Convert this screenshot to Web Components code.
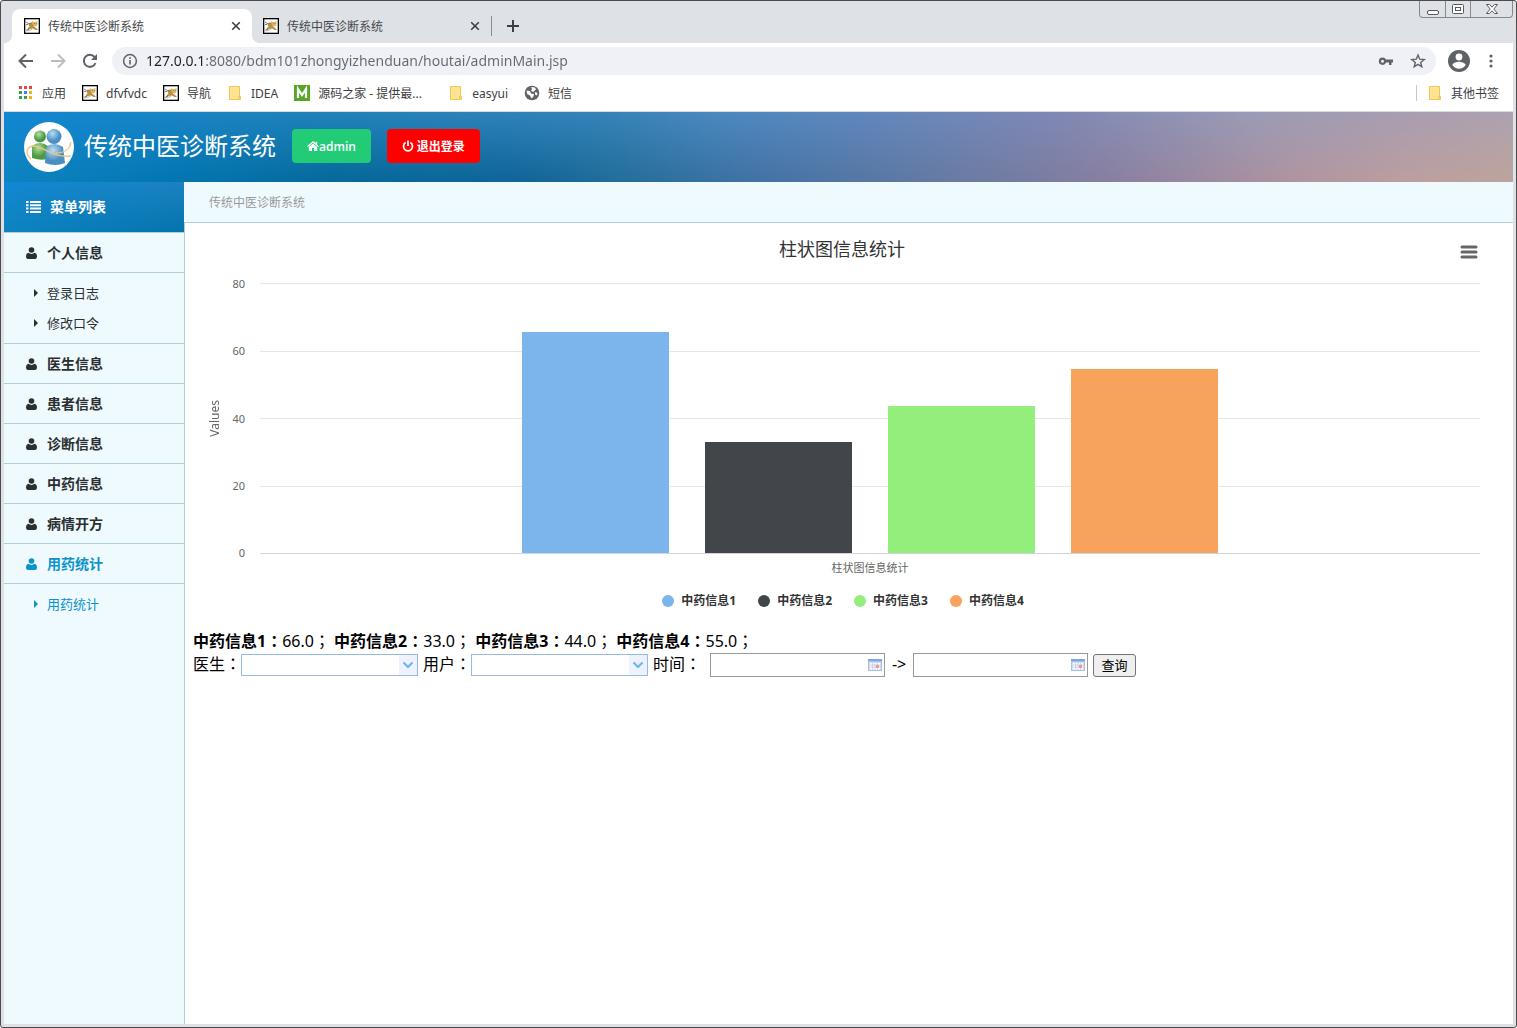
<!DOCTYPE html>
<html lang="zh-CN">
<head>
<meta charset="utf-8">
<title>传统中医诊断系统</title>
<style>
  body { margin: 0; font-family: "Noto Sans", "Noto Sans CJK SC", sans-serif; font-size: 12px; color: #333; }
</style>
</head>
<body>
<window-frame>
  <tab-strip slot="chrome">
    <browser-tab active>传统中医诊断系统</browser-tab>
    <browser-tab>传统中医诊断系统</browser-tab>
  </tab-strip>
  <address-bar slot="chrome" url="127.0.0.1:8080/bdm101zhongyizhenduan/houtai/adminMain.jsp"></address-bar>
  <bookmark-bar slot="chrome">
    <bookmark-link icon="apps">应用</bookmark-link>
    <bookmark-link icon="cat">dfvfvdc</bookmark-link>
    <bookmark-link icon="cat">导航</bookmark-link>
    <bookmark-link icon="folder">IDEA</bookmark-link>
    <bookmark-link icon="mark" wide>源码之家 - 提供最...</bookmark-link>
    <bookmark-link icon="folder">easyui</bookmark-link>
    <bookmark-link icon="globe">短信</bookmark-link>
    <bookmark-link slot="end" icon="folder">其他书签</bookmark-link>
  </bookmark-bar>
  <site-header heading="传统中医诊断系统">
    <header-button icon="home" tone="green">admin</header-button>
    <header-button icon="power" tone="red">退出登录</header-button>
  </site-header>
  <app-layout>
    <side-menu slot="menu" heading="菜单列表">
      <menu-group heading="个人信息">
        <menu-link>登录日志</menu-link>
        <menu-link>修改口令</menu-link>
      </menu-group>
      <menu-group heading="医生信息"></menu-group>
      <menu-group heading="患者信息"></menu-group>
      <menu-group heading="诊断信息"></menu-group>
      <menu-group heading="中药信息"></menu-group>
      <menu-group heading="病情开方"></menu-group>
      <menu-group heading="用药统计" active>
        <menu-link>用药统计</menu-link>
      </menu-group>
    </side-menu>
    <crumb-bar slot="crumb">传统中医诊断系统</crumb-bar>
    <bar-chart heading="柱状图信息统计" max="80" step="20" axis="Values"
      series='[["中药信息1",66,"#7cb5ec"],["中药信息2",33,"#424549"],["中药信息3",44,"#94ee7c"],["中药信息4",55,"#f7a35c"]]'></bar-chart>
    <stat-line series='[["中药信息1","66.0"],["中药信息2","33.0"],["中药信息3","44.0"],["中药信息4","55.0"]]'></stat-line>
    <filter-form></filter-form>
  </app-layout>
</window-frame>

<script>
const base = `<style>
  :host { display: block; box-sizing: border-box; }
  *, ::before, ::after { box-sizing: border-box; }
  button, input, select { font: inherit; color: inherit; margin: 0; }
  button { background: none; border: 0; padding: 0; }
  a { color: inherit; text-decoration: none; }
  svg { display: block; flex: none; }
</style>`;

function element(name, view) {
  customElements.define(name, class extends HTMLElement {
    connectedCallback() {
      if (this.shadowRoot) return;
      this.attachShadow({ mode: 'open' }).innerHTML = base + view(this);
    }
  });
}

const icons = {
  cat: [16, `<rect x=".5" y=".5" width="15" height="15" fill="#fff" stroke="#000"/><rect x="1" y="1" width="14" height="14" fill="none" stroke="#000" stroke-width=".6"/>
    <path d="M8 3l1.500 1h2L13.500 3v3.500L12 8.500 9.500 8 8 6.500z" fill="#e0b562"/>
    <path d="M4 5.500l4-.5 2 3.500 2 1.500 2 2h-2.500L9 10.500 6 11l-2.500 2 .5-3 1.500-1.500z" fill="#b98e45"/>
    <path d="M2 4l2.500 1.500L8 5M2 6.500h2M2 12.500l3-2M10 5.500h.8M12 5.500h.6" stroke="#6f6657" stroke-width=".8" fill="none"/>
    <path d="M2.500 13l3-.5 3-1.500" stroke="#aaa" stroke-width=".8" fill="none"/>`],
  apps: [16, `<g><path fill="#e9443a" d="M1 1h3v3H1zM6 1h3v3H6zM11 1h3v3h-3z"/><path fill="#34a050" d="M1 6h3v3H1zM1 11h3v3H1zM6 11h3v3H6z"/><path fill="#3a82f7" d="M6 6h3v3H6z"/><path fill="#f8b013" d="M11 6h3v3h-3zM11 11h3v3h-3z"/></g>`],
  folder: [16, `<path d="M2.500 1.500h10v9.500a1.500 1.500 0 0 1 1 1.500v2h-11z" fill="#ffe494" stroke="#efc653"/><path d="M11.500 14.500v-3h1.500v3" fill="#ffe494" stroke="#efc653"/>`],
  mark: [16, `<path fill="#56a726" d="M0 0h16v16H0z"/><path d="M4 13V4l4 6 4-6v9" fill="none" stroke="#fff" stroke-width="2.200"/>`],
  globe: [16, `<circle cx="8" cy="8" r="7.300" fill="#5f6368"/><path d="M2.500 5.500l3.500.5 1 2.500 3 .5-.5 2.500-2 2-1.500-3L3 9zM7 2l4 .5 1 2-3 2.500-2-1.500 1-1.500zM11 7l2.500 1-.5 2.500-2-1z" fill="#fff"/>`],
  back: [16, `<path d="M15 8H2M8 1.500L1.500 8 8 14.500" fill="none" stroke="#5f6368" stroke-width="2"/>`],
  forward: [16, `<path d="M1 8h13M8 1.500L14.500 8 8 14.500" fill="none" stroke="#bcbec1" stroke-width="2"/>`],
  reload: [16, `<path d="M13.500 10A6 6 0 1 1 12.500 4" fill="none" stroke="#5f6368" stroke-width="2"/><path d="M15 1v6H9z" fill="#5f6368"/>`],
  info: [16, `<circle cx="8" cy="8" r="6.400" fill="none" stroke="#5f6368" stroke-width="1.500"/><path d="M8 7v4.500M8 4.300v1.600" stroke="#5f6368" stroke-width="1.600"/>`],
  key: [16, `<path d="M4.500 4.500a3.700 3.700 0 1 0 3.500 5h3V12h2.500V9.500H15v-3H8a3.700 3.700 0 0 0-3.500-2zm0 2.200a1.500 1.500 0 1 1 0 3 1.500 1.500 0 0 1 0-3z" fill="#5f6368" fill-rule="evenodd"/>`],
  star: [16, `<path d="M8 2l1.700 4.200 4.500.3-3.500 2.900 1.100 4.400L8 11.400l-3.800 2.400 1.100-4.400L1.800 6.500l4.500-.3z" fill="none" stroke="#5f6368" stroke-width="1.400"/>`],
  person: [22, `<circle cx="11" cy="11" r="11" fill="#5f6368"/><circle cx="11" cy="7" r="3.400" fill="#fff"/><path d="M4.300 15C5 12.600 9 11.800 11 11.800s6 .8 6.700 3.200a8 8 0 0 1-13.400 0z" fill="#fff"/>`],
  dots: [16, `<g fill="#5f6368"><circle cx="8" cy="3" r="1.600"/><circle cx="8" cy="8" r="1.600"/><circle cx="8" cy="13" r="1.600"/></g>`],
  close: [10, `<path d="M1.200 1.200l7.600 7.600M8.800 1.200L1.200 8.800" stroke="#3c4043" stroke-width="1.600"/>`],
  plus: [12, `<path d="M6 0v12M0 6h12" stroke="#3c4043" stroke-width="2"/>`],
  home: [12, `<path d="M6 1L0 6.200l.8.900L6 2.800l5.200 4.300.8-.9-1.800-1.500V1.700H8.600v1.500z" fill="currentColor"/><path d="M6 3.400L1.800 7V11H5V8h2v3h3.200V7z" fill="currentColor"/>`],
  power: [12, `<path d="M3.600 2.500a4.500 4.500 0 1 0 4.800 0M6 .5v5.500" fill="none" stroke="currentColor" stroke-width="1.700"/>`],
  user: [12, `<circle cx="5.500" cy="3" r="2.800" fill="currentColor"/><path d="M2.500 5.800C.8 6.200 0 7.500 0 9.600 0 11.100.8 12 2 12h7c1.200 0 2-.9 2-2.400 0-2.100-.7-3.400-2.500-3.800-1.500 1.500-4.500 1.500-6 0z" fill="currentColor"/>`],
  list: [16, `<path d="M0 2h2.500v2H0zM4 2h11v2H4zM0 5.300h2.500v2H0zM4 5.300h11v2H4zM0 8.600h2.500v2H0zM4 8.600h11v2H4zM0 11.900h2.500v2H0zM4 11.900h11v2H4z" fill="currentColor"/>`],
  caret: [8, `<path d="M2 0v8l4-4z" fill="currentColor"/>`],
  menu: [18, `<path d="M2 4h14M2 9h14M2 14h14" stroke="#666" stroke-width="3" stroke-linecap="round"/>`],
  chevron: [12, `<path d="M1.500 3.500L6 8l4.500-4.500" fill="none" stroke="#6fb5ea" stroke-width="2.200"/>`],
  calendar: [14, `<path d="M0 1h14v12H0z" fill="#cfdcf1"/><path d="M0 1h14v2.500H0z" fill="#7fa5e3"/><path d="M2 5h10v6.500H2z" fill="#fff"/><path d="M2 7h10M2 9h10M4.500 5v6.500M7 5v6.500M9.500 5v6.500" stroke="#bccbe8" stroke-width=".8"/><path d="M8 7h3v3H8z" fill="#ee9a86"/><path d="M0 12.500h14M.5 4v9M13.500 4v9" stroke="#b0bfdb"/>`],
};
const icon = name => `<svg width="${icons[name][0]}" height="${icons[name][0]}" viewBox="0 0 ${icons[name][0]} ${icons[name][0]}" aria-hidden="true">${icons[name][1]}</svg>`;

/* Fullwidth marks are centred in their cell in the Traditional Chinese forms */
const mark = ch => `<span class="mid" lang="zh-TW">${ch}</span>`;
const midStyle = `.mid { font-family: "Noto Sans CJK TC", sans-serif; line-height: 1; }`;

/* Sky-to-sunset artwork shared by the header and the menu heading */
const artwork = sel => `
  ${sel} { position: relative; z-index: 0; background: var(--low); }
  ${sel}::before { content: ""; position: absolute; inset: 0; z-index: -1; background: var(--high);
    -webkit-mask-image: linear-gradient(#000, transparent); mask-image: linear-gradient(#000, transparent); }`;

element('window-frame', () => `<style>
  :host { display: flex; flex-direction: column; min-height: 100vh; background: #dee1e6;
    border: 1px solid #4b4b4d; border-radius: 3px; padding: 0 3px 3px; }
  .page { flex: 1; display: flex; flex-direction: column; background: #fff; }
</style><slot name="chrome"></slot><div class="page"><slot></slot></div>`);

element('tab-strip', () => `<style>
  :host { display: flex; height: 42px; padding-left: 8px; align-items: flex-end; }
  .new { display: flex; align-items: center; height: 20px; margin-bottom: 7px; border-left: 1px solid #888c90; padding-left: 15px; }
  .controls { margin-left: auto; align-self: flex-start; display: flex; border: 1px solid #85898f; border-top: 0; border-radius: 0 0 4px 4px; }
  .controls button { height: 16px; width: 25px; display: grid; place-items: center; border-left: 1px solid #85898f; }
  .controls button:first-child { border-left: 0; }
  .controls button:last-child { width: 42px; }
</style><slot></slot>
<button class="new" aria-label="+">${icon('plus')}</button>
<div class="controls">
  <button aria-label="_"><svg width="12" height="12"><rect x=".5" y="7.500" width="11" height="4" rx="1.500" fill="#fff" stroke="#55585d"/></svg></button>
  <button aria-label="□"><svg width="12" height="12"><rect x=".5" y="1.500" width="11" height="9" rx="1" fill="#fff" stroke="#55585d"/><rect x="3.500" y="4.500" width="5" height="3" fill="#fff" stroke="#55585d"/></svg></button>
  <button aria-label="×"><svg width="12" height="12"><path d="M.5 1.500h3L6 4.200l2.500-2.700h3L7.800 6l3.700 4.500h-3L6 7.800l-2.500 2.700h-3L4.200 6z" fill="#fff" stroke="#55585d"/></svg></button>
</div>`);

element('browser-tab', () => `<style>
  :host { display: flex; width: 239px; height: 34px; padding: 0 11px; align-items: center; gap: 8px; position: relative; color: #45494d; }
  :host([active]) { width: 240px; padding: 0 11px 0 12px; background: #fff; border-radius: 8px 8px 0 0; }
  :host([active])::before, :host([active])::after { content: ""; position: absolute; bottom: 0; width: 8px; height: 8px; }
  :host([active])::before { left: -8px; background: radial-gradient(circle at 0 0, transparent 8px, #fff 8px); }
  :host([active])::after { right: -8px; background: radial-gradient(circle at 100% 0, transparent 8px, #fff 8px); }
  .name { flex: 1; text-align: left; line-height: 18px; padding-top: 2px; }
</style>${icon('cat')}<button class="name"><slot></slot></button><button aria-label="×">${icon('close')}</button>`);

element('address-bar', host => `<style>
  :host { display: flex; align-items: center; gap: 16px; height: 36px; padding: 0 14px; background: #fff; }
  .box { flex: 1; display: flex; align-items: center; gap: 16px; height: 28px; border-radius: 14px; background: #eff1f7; padding: 0 10px; margin: 0 -4px 0 -2px; }
  input { flex: 1; min-width: 0; margin-left: -8px; border: 0; padding: 0; outline: 0; font-size: 14px; line-height: 20px;
    color: transparent; background: linear-gradient(to right, #202124 60px, #65696e 60px); -webkit-background-clip: text; background-clip: text; }
  .user { margin-right: -3px; }
</style>
<button aria-label="←">${icon('back')}</button><button aria-label="→">${icon('forward')}</button><button aria-label="↻">${icon('reload')}</button>
<div class="box">${icon('info')}<input type="text" aria-label="URL" value="${host.getAttribute('url')}"><button aria-label="key">${icon('key')}</button><button aria-label="☆">${icon('star')}</button></div>
<button class="user" aria-label="user">${icon('person')}</button><button aria-label="⋮">${icon('dots')}</button>`);

element('bookmark-bar', () => `<style>
  :host { display: flex; align-items: center; gap: 16px; height: 33px; padding: 0 14px 4px; background: #fff; border-bottom: 1px solid #d9dade; }
  .end { margin-left: auto; border-left: 1px solid #c6c8cb; padding-left: 10px; height: 16px; display: flex; align-items: center; }
</style><slot></slot><div class="end"><slot name="end"></slot></div>`);

element('bookmark-link', host => `<style>
  :host([wide]) { width: 138px; }
  a { display: flex; align-items: center; gap: 8px; line-height: 18px; color: #3c4043; white-space: nowrap; }
  span { padding-top: 2px; }
</style><a href="#">${icon(host.getAttribute('icon'))}<span><slot></slot></span></a>`);

element('site-header', host => `<style>
  :host { --low: linear-gradient(to right, #0d84c0, #0275b0 12%, #06699b 22%, #0f6498 34%, #276f9b 42%, #4372a5 50%, #5f79a3 60%, #887fa0 73%, #b295a0 86%, #bd9f9f 93%, #bea49c);
    --high: linear-gradient(to right, #1287d2, #1f82ba 20%, #3683b8 40%, #4a88bf 47%, #6187bd 57%, #8088b4 70%, #9b9bb5 83%, #a89db0 93%, #aca2b0); }
  header { display: flex; align-items: center; height: 70px; padding-left: 20px; gap: 16px; }
  ${artwork('header')}
  .brand { display: flex; align-items: center; gap: 10px; }
  h1 { margin: 0; padding-bottom: 2px; font-size: 24px; line-height: 32px; font-weight: 400; color: #fff; }
</style><header><div class="brand">
<svg width="50" height="50" viewBox="0 0 50 50" aria-hidden="true">
  <defs>
    <radialGradient id="g" cx=".4" cy=".3"><stop offset="0" stop-color="#b5dd9e"/><stop offset="1" stop-color="#4c9a45"/></radialGradient>
    <radialGradient id="b" cx=".4" cy=".3"><stop offset="0" stop-color="#b9def5"/><stop offset="1" stop-color="#4a8ec2"/></radialGradient>
  </defs>
  <circle cx="25" cy="25" r="25" fill="#fff"/>
  <path d="M8 24q8-6 16 0v13q-8 2-16-1z" fill="url(#g)"/><circle cx="16" cy="14.500" r="6" fill="url(#g)"/>
  <path d="M22 25q8-6 17 0l2 16q-10 4-20 0z" fill="url(#b)"/><circle cx="30" cy="14.500" r="7.500" fill="url(#b)"/>
  <path d="M7 37C0 31 3 24 10 24c9 0 18 12 37 10M32 31c7 0 14-3 15-11" fill="none" stroke="#efc67b" stroke-width="1.400"/>
</svg><h1>${host.getAttribute('heading')}</h1></div><slot></slot></header>`);

element('header-button', host => `<style>
  :host { margin-bottom: 2px; font-family: "Open Sans", "Noto Sans CJK SC", sans-serif; }
  button { display: flex; align-items: center; height: 34px; padding: 0 15px; border-radius: 4px; color: #fff; font-weight: 600; background: #22cc77; }
  :host([tone=red]) button { background: #fe0000; gap: 3px; }
</style><button>${icon(host.getAttribute('icon'))}<span><slot></slot></span></button>`);

element('app-layout', () => `<style>
  :host { flex: 1; display: flex; }
  main { flex: 1; min-width: 0; display: flex; flex-direction: column; }
  .work { flex: 1; border-left: 1px solid #b3cfd6; padding: 0 8px; }
</style><slot name="menu"></slot><main><slot name="crumb"></slot><div class="work"><slot></slot></div></main>`);

element('side-menu', host => `<style>
  :host { width: 180px; flex: none; background: #effaff;
    --low: linear-gradient(to right, #0d84c0, #0474ad); --high: linear-gradient(to right, #1287d2, #1c82c0); }
  h2 { display: flex; align-items: center; gap: 8px; margin: 0; height: 51px; padding-left: 22px; border-bottom: 1px solid #b3cfd6; font-size: 14px; color: #fff; }
  h2 span { padding-bottom: 2px; }
  ${artwork('h2')}
</style><nav><h2>${icon('list')}<span>${host.getAttribute('heading')}</span></h2><slot></slot></nav>`);

element('menu-group', host => `<style>
  :host { color: #2b2f2f; }
  :host([active]) { color: #0c93c9; }
  button { display: flex; align-items: center; gap: 9px; width: 100%; height: 40px; padding-left: 22px; border-bottom: 1px solid #b3cfd6; font-size: 14px; font-weight: 700; }
  button span { padding-bottom: 2px; }
  .sub { padding: 5px 0; border-bottom: 1px solid #b3cfd6; }
  :host([active]) .sub { border-bottom: 0; }
</style><button>${icon('user')}<span>${host.getAttribute('heading')}</span></button>${host.children.length ? '<div class="sub"><slot></slot></div>' : ''}`);

element('menu-link', () => `<style>
  a { display: flex; align-items: center; gap: 7px; height: 30px; padding-left: 28px; font-size: 13px; }
  span { padding-bottom: 2px; }
</style><a href="#">${icon('caret')}<span><slot></slot></span></a>`);

element('crumb-bar', () => `<style>
  :host { height: 41px; line-height: 42px; padding-left: 25px; background: #effaff; border-bottom: 1px solid #b3cfd6; color: #999; }
</style><slot></slot>`);

element('bar-chart', host => {
  const series = JSON.parse(host.getAttribute('series'));
  const max = +host.getAttribute('max'), step = +host.getAttribute('step');
  const ticks = [];
  for (let t = max; t >= 0; t -= step) ticks.push(t);
  const name = host.getAttribute('heading');
  return `<style>
  :host { padding: 14px 14px 0 0; color: #666; }
  .top { display: grid; grid-template-columns: 1fr auto 1fr; align-items: center; height: 24px; }
  h2 { margin: 0; grid-column: 2; font-size: 18px; line-height: 24px; font-weight: 400; color: #333; }
  .top button { justify-self: end; margin: 6px 13px 0 0; }
  .body { display: grid; grid-template-columns: 29px 23px 1fr; margin: 22px 11px 0 0; font-size: 11px; }
  .axis { writing-mode: vertical-rl; transform: rotate(180deg); justify-self: end; align-self: center; line-height: 14px; font-size: 12px; }
  .ticks { display: flex; flex-direction: column; justify-content: space-between; margin: -6px 0; text-align: right; line-height: 14px; }
  .plot { display: grid; height: 271px; margin-left: 15px; }
  .lines, .bars { grid-area: 1 / 1; display: flex; }
  .lines { flex-direction: column; justify-content: space-between; }
  .lines i { height: 1px; background: #e6e6e6; }
  .lines i:last-child { background: #d0d4e0; }
  .bars { align-items: flex-end; justify-content: center; gap: 3%; padding: 2px 0 1px; z-index: 1; }
  .bars i { width: 12%; }
  .cat { grid-column: 3; text-align: center; line-height: 16px; margin: 6px 0 0 15px; }
  ul { display: flex; justify-content: center; gap: 22px; margin: 15px 0 0; padding: 0 0 0 2px; list-style: none; font-weight: 700; color: #333; line-height: 20px; }
  li { display: flex; align-items: center; gap: 7px; }
  li i { width: 12px; height: 12px; border-radius: 50%; }
</style>
<div class="top"><h2>${name}</h2><button aria-label="menu">${icon('menu')}</button></div>
<div class="body"><span class="axis">${host.getAttribute('axis')}</span>
<div class="ticks">${ticks.map(t => `<span>${t}</span>`).join('')}</div>
<div class="plot"><div class="lines">${ticks.map(() => '<i></i>').join('')}</div>
<div class="bars">${series.map(s => `<i style="height:${s[1] / max * 100}%;background:${s[2]}"></i>`).join('')}</div></div>
<div class="cat">${name}</div></div>
<ul>${series.map(s => `<li><i style="background:${s[2]}"></i>${s[0]}</li>`).join('')}</ul>`;
});

element('stat-line', host => `<style>
  :host { margin-top: 19px; font-size: 16px; line-height: 22px; color: #000; }
  p { margin: 0; height: 23px; }
  ${midStyle}
</style><p>${JSON.parse(host.getAttribute('series')).map(s => `<b>${s[0]}${mark('：')}</b>${s[1]}${mark('；')}`).join(' ')}</p>`);

element('filter-form', () => `<style>
  :host { font-size: 16px; line-height: 22px; color: #000; }
  form { display: flex; align-items: center; height: 24px; }
  label { padding-bottom: 2px; }
  ${midStyle}
  .combo, .date { display: grid; grid-template: 100% / 1fr auto; align-items: center; }
  .combo { width: 177px; height: 22px; margin-right: 5px; border: 1px solid #95b8e7; }
  .combo select, .date input { grid-area: 1 / 1 / 2 / 3; min-width: 0; width: 100%; height: 100%; border: 0; padding: 0 4px; background: #fff; appearance: none; border-radius: 0; }
  .combo span { grid-area: 1 / 2; width: 18px; height: 20px; display: grid; place-items: center; background: #eef2ff; pointer-events: none; }
  .date { width: 175px; height: 24px; border: 1px solid #999; }
  .date span { grid-area: 1 / 2; padding-right: 2px; }
  .time { margin-right: 9px; }
  .to { width: 28px; text-align: center; }
  .go { margin-left: 5px; width: 43px; height: 23px; border: 1px solid #767676; border-radius: 3px; background: #efefef; font-size: 13px; line-height: 18px; }
</style><form>
<label for="doctor">医生${mark('：')}</label><div class="combo"><select id="doctor"><option></option></select><span>${icon('chevron')}</span></div>
<label for="patient">用户${mark('：')}</label><div class="combo"><select id="patient"><option></option></select><span>${icon('chevron')}</span></div>
<label class="time" for="from">时间${mark('：')}</label><div class="date"><input id="from" type="text"><span>${icon('calendar')}</span></div>
<label class="to" for="until">-&gt;</label><div class="date"><input id="until" type="text"><span>${icon('calendar')}</span></div>
<button class="go" type="button">查询</button></form>`);
</script>
</body>
</html>
